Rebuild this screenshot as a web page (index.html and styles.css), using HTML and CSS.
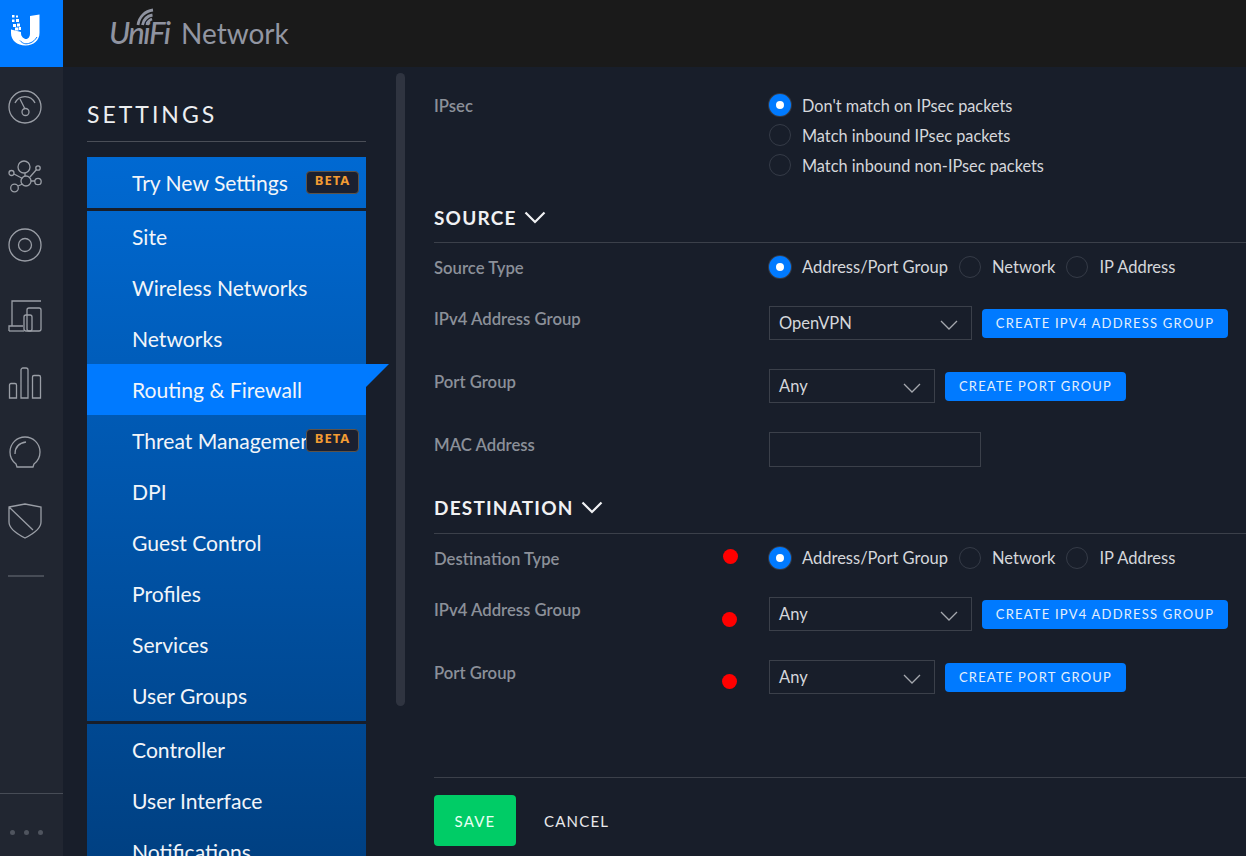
FILE: index.html
```html
<!DOCTYPE html>
<html lang="en">
<head>
  <meta charset="UTF-8" />
  <meta name="viewport" content="width=device-width, initial-scale=1.0"/>
  <title>UniFi Network</title>
  <link rel="stylesheet" href="styles.css">
</head>
<body>
  <div class="app">
    <header class="topbar">
      <a class="logo-box">
        <svg width="32" height="34" viewBox="0 0 32 34">
          <path fill="#fff" d="M20 3L29.500 1.500V20C29.500 27.500 23.500 32.500 15.500 32.500C7 32.500 1 27.500 1 20V16.500L11 19V20.500C11 23.500 14 26 16 26C18.500 26 20 23.500 20 20.500Z"/>
          <path fill="#fff" d="M2 2h2.500v2.500H2zM6 2.500h2v2H6zM2 6.500h2.500v2.500H2zM6 6h3v3H6zM3 11h3v3H3zM7 10.500h3v3H7zM5 14.500h3.500v3H5zM9 14h2v3H9z"/>
          <path fill="none" stroke="#007aff" stroke-width="1" d="M10 27.500c3 3.500 6 4 10 2.500 3-1 5-3 7-6"/>
        </svg>
      </a>
      <div class="wordmark">
        <svg class="wifi" width="26" height="18" viewBox="0 0 26 18">
          <path fill="none" stroke="#8f93a0" stroke-width="2.800" d="M3 17C4 9 10 3 18 2M7.500 17c1-5 4.500-9 10-10M12 17c.5-3 2.500-5 5-6"/>
        </svg>
        <span class="wordmark-unifi">UniFi</span>
        <span class="wordmark-network">Network</span>
      </div>
    </header>

    <nav class="rail">
      <svg class="rail-icon" viewBox="0 0 34 34"><circle cx="17" cy="17" r="16"/><path d="M7 13a11 11 0 0 1 20 0M12 9l5 10"/><circle cx="17.500" cy="22" r="3.500"/></svg>
      <svg class="rail-icon" viewBox="0 0 34 34"><circle cx="16" cy="8" r="6"/><circle cx="18" cy="22" r="5"/><circle cx="30" cy="9" r="2.200"/><circle cx="30" cy="22.500" r="3.200"/><circle cx="3.500" cy="14" r="2.500"/><circle cx="6.500" cy="29" r="3.800"/><path d="M17 14v3M22 18l6.500-7.500M23 22h4M6 15l8.500 4.500M10 27l4.500-2"/></svg>
      <svg class="rail-icon" viewBox="0 0 34 34"><circle cx="17" cy="17" r="16"/><circle cx="17" cy="17" r="6.500"/></svg>
      <svg class="rail-icon" viewBox="0 0 34 34"><path d="M33 4H4v25M1 34v-5h14"/><path d="M1 34h15"/><rect x="19" y="11" width="14" height="23" rx="2"/><rect x="16" y="18" width="8" height="16" rx="2"/></svg>
      <svg class="rail-icon" viewBox="0 0 34 34"><path d="M1.500 32V19a1.500 1.500 0 0 1 1.500-1.500h4A1.500 1.500 0 0 1 8.500 19v13zM13 32V4a2 2 0 0 1 2-2h3a2 2 0 0 1 2 2v28zM24.500 32V11a1.500 1.500 0 0 1 1.500-1.500h5a1.500 1.500 0 0 1 1.500 1.500v21z"/></svg>
      <svg class="rail-icon" viewBox="0 0 34 34"><path d="M9 32h16l1-3c4-3 6-7 6-12A15 15 0 0 0 2 17c0 5 2 9 6 12zM7 19c0-7 4-11 11-12"/></svg>
      <svg class="rail-icon" viewBox="0 0 34 34"><path d="M1 3l16-3 16 3v15c0 7-8 12-16 16C9 30 1 25 1 18zM1 3l24 23"/></svg>
      <div class="rail-divider"></div>
      <div class="rail-bottom"><i></i><i></i><i></i></div>
    </nav>

    <main class="workspace">
      <aside class="settings-panel">
        <h1 class="settings-title">SETTINGS</h1>
        <div class="menu">
          <div class="menu-group">
            <a class="menu-item">Try New Settings<span class="beta">BETA</span></a>
          </div>
          <div class="menu-group">
            <a class="menu-item">Site</a>
            <a class="menu-item">Wireless Networks</a>
            <a class="menu-item">Networks</a>
            <a class="menu-item active">Routing &amp; Firewall</a>
            <a class="menu-item">Threat Management<span class="beta">BETA</span></a>
            <a class="menu-item">DPI</a>
            <a class="menu-item">Guest Control</a>
            <a class="menu-item">Profiles</a>
            <a class="menu-item">Services</a>
            <a class="menu-item">User Groups</a>
          </div>
          <div class="menu-group">
            <a class="menu-item">Controller</a>
            <a class="menu-item">User Interface</a>
            <a class="menu-item">Notifications</a>
          </div>
        </div>
        <div class="scrollbar"></div>
      </aside>

      <section class="content">
        <div class="form-row ipsec-row">
          <div class="form-label">IPsec</div>
          <div class="radio-stack">
            <label class="radio"><span class="radio-dot on"></span>Don't match on IPsec packets</label>
            <label class="radio"><span class="radio-dot"></span>Match inbound IPsec packets</label>
            <label class="radio"><span class="radio-dot"></span>Match inbound non-IPsec packets</label>
          </div>
        </div>

        <h2 class="section-title">SOURCE
          <svg width="22" height="13" viewBox="0 0 22 13"><path d="M1.500 1.500l9.500 9.500 9.500-9.500"/></svg>
        </h2>
        <div class="form-row">
          <div class="form-label">Source Type</div>
          <div class="radio-line">
            <label class="radio"><span class="radio-dot on"></span>Address/Port Group</label>
            <label class="radio"><span class="radio-dot"></span>Network</label>
            <label class="radio"><span class="radio-dot"></span>IP Address</label>
          </div>
        </div>
        <div class="form-row row-select">
          <div class="form-label label-select">IPv4 Address Group</div>
          <div class="control-line">
            <div class="select select-wide">OpenVPN<svg width="18" height="10" viewBox="0 0 18 10"><path d="M1 1l8 8 8-8"/></svg></div>
            <button class="btn-create btn-ipv4">CREATE IPV4 ADDRESS GROUP</button>
          </div>
        </div>
        <div class="form-row row-select">
          <div class="form-label label-select">Port Group</div>
          <div class="control-line">
            <div class="select select-narrow">Any<svg width="18" height="10" viewBox="0 0 18 10"><path d="M1 1l8 8 8-8"/></svg></div>
            <button class="btn-create btn-port">CREATE PORT GROUP</button>
          </div>
        </div>
        <div class="form-row row-select">
          <div class="form-label label-select">MAC Address</div>
          <div class="control-line"><div class="text-input"></div></div>
        </div>

        <h2 class="section-title section-dest">DESTINATION
          <svg width="22" height="13" viewBox="0 0 22 13"><path d="M1.500 1.500l9.500 9.500 9.500-9.500"/></svg>
        </h2>
        <div class="form-row">
          <div class="form-label">Destination Type</div>
          <div class="radio-line">
            <label class="radio"><span class="radio-dot on"></span>Address/Port Group</label>
            <label class="radio"><span class="radio-dot"></span>Network</label>
            <label class="radio"><span class="radio-dot"></span>IP Address</label>
          </div>
          <span class="red-dot dot-type"></span>
        </div>
        <div class="form-row row-select">
          <div class="form-label label-select">IPv4 Address Group</div>
          <div class="control-line">
            <div class="select select-wide">Any<svg width="18" height="10" viewBox="0 0 18 10"><path d="M1 1l8 8 8-8"/></svg></div>
            <button class="btn-create btn-ipv4">CREATE IPV4 ADDRESS GROUP</button>
          </div>
          <span class="red-dot dot-group"></span>
        </div>
        <div class="form-row row-select">
          <div class="form-label label-select">Port Group</div>
          <div class="control-line">
            <div class="select select-narrow">Any<svg width="18" height="10" viewBox="0 0 18 10"><path d="M1 1l8 8 8-8"/></svg></div>
            <button class="btn-create btn-port">CREATE PORT GROUP</button>
          </div>
          <span class="red-dot dot-port"></span>
        </div>

        <div class="form-actions">
          <button class="btn-save">SAVE</button>
          <button class="btn-cancel">CANCEL</button>
        </div>
      </section>
    </main>
  </div>
</body>
</html>
```

FILE: styles.css
```css
* { box-sizing: border-box; }
html, body {
  margin: 0;
  height: 100%;
  overflow: hidden;
}
body {
  font-family: Lato, "Open Sans", sans-serif;
  font-size: 16px;
  background: #181e2a;
  color: #fff;
}
.app {
  display: grid;
  grid-template-columns: 63px 1fr;
  grid-template-rows: 67px 1fr;
  height: 856px;
}

/* top bar */
.topbar {
  grid-column: 1 / 3;
  display: flex;
  background: #1a1a1a;
}
.logo-box {
  width: 63px;
  height: 67px;
  background: #007aff;
  padding: 13px 0 0 10px;
}
.wordmark {
  position: relative;
  display: flex;
  align-items: baseline;
  margin-left: 46px;
  padding-top: 13px;
  color: #8f93a0;
}
.wordmark-unifi {
  font-style: italic;
  font-weight: 500;
  font-size: 31px;
  width: 72px;
  letter-spacing: -1.500px;
}
.wordmark-network {
  font-size: 28px;
  color: #9296a2;
}
.wifi {
  position: absolute;
  left: 26px;
  top: 8px;
}

/* left rail */
.rail {
  display: flex;
  flex-direction: column;
  background: #212631;
  padding-top: 23px;
  position: relative;
}
.rail-icon {
  width: 34px;
  height: 34px;
  margin: 0 0 35px 8px;
  fill: none;
  stroke: #9a9ea6;
  stroke-width: 1.300;
  flex: none;
  overflow: visible;
}
.rail-divider {
  width: 36px;
  height: 2px;
  background: #474c56;
  margin: 2px 0 0 8px;
}
.rail-bottom {
  margin-top: auto;
  height: 63px;
  border-top: 1px solid #474c56;
  display: flex;
  gap: 9px;
  padding: 36px 0 0 10px;
}
.rail-bottom i {
  width: 5px;
  height: 5px;
  border-radius: 50%;
  background: #4f545e;
}

/* settings menu */
.workspace {
  display: flex;
  min-width: 0;
  overflow: hidden;
}
.settings-panel {
  position: relative;
  width: 371px;
  flex: none;
  padding: 0 0 0 24px;
}
.settings-title {
  margin: 0;
  width: 279px;
  height: 75px;
  padding-top: 32px;
  font-size: 23px;
  font-weight: 400;
  line-height: 30px;
  letter-spacing: 3px;
  color: #eceef0;
  border-bottom: 1px solid #4a4e57;
}
.menu {
  width: 279px;
  margin-top: 15px;
  background: linear-gradient(#0069d2, #003f80);
}
.menu-group + .menu-group { border-top: 3px solid #181e2a; }
.menu-item {
  position: relative;
  display: block;
  height: 51px;
  padding-left: 45px;
  font-size: 21.100px;
  line-height: 52px;
  white-space: nowrap;
  color: #f2f5f9;
}
.menu-item.active { background: #007aff; }
.menu-item.active::after {
  content: "";
  position: absolute;
  left: 100%;
  top: 0;
  border-top: 23px solid #007aff;
  border-right: 23px solid transparent;
}
.beta {
  position: absolute;
  left: 219px;
  top: 14px;
  width: 53px;
  height: 23px;
  background: #1b2030;
  border: 1px solid #5e5348;
  border-radius: 4px;
  font-family: "Noto Sans", sans-serif;
  font-size: 13px;
  font-weight: 700;
  line-height: 17px;
  letter-spacing: 1px;
  text-align: center;
  color: #f39c33;
}
.scrollbar {
  position: absolute;
  left: 333px;
  top: 6px;
  width: 9px;
  height: 633px;
  border-radius: 5px;
  background: #2f3440;
}

/* form */
.content {
  position: relative;
  flex: 1;
  min-width: 0;
  padding-top: 27px;
}
.form-row {
  position: relative;
  display: grid;
  grid-template-columns: 335px 1fr;
  margin-bottom: 28px;
}
.row-select { margin-bottom: 29px; }
.ipsec-row { margin-bottom: 30px; }
.form-label {
  height: 22px;
  padding-top: 1px;
  font-size: 16.700px;
  font-weight: 600;
  line-height: 22px;
  color: #8b9099;
}
.label-select { padding-top: 2px; }
.radio-stack {
  display: flex;
  flex-direction: column;
  gap: 8px;
  font-size: 16.300px;
}
.radio-stack .radio {
  height: 22px;
  padding-top: 2px;
}
.radio-stack .radio-dot { margin-top: -2px; }
.radio-line {
  display: flex;
  gap: 11px;
  font-size: 16.500px;
}
.radio {
  display: flex;
  align-items: center;
  gap: 11px;
  line-height: 22px;
  color: #d5d7db;
}
.radio-dot {
  width: 22px;
  height: 22px;
  border-radius: 50%;
  border: 1px solid #353b47;
  flex: none;
}
.radio-dot.on {
  border: 7px solid #007aff;
  background: #fff;
  box-shadow: 0 0 0 1px #353b47;
}
.section-title {
  display: flex;
  align-items: center;
  gap: 7px;
  margin: 0 0 13px;
  height: 37px;
  padding-bottom: 13px;
  border-bottom: 1px solid #3b404a;
  font-size: 19px;
  font-weight: 700;
  letter-spacing: 1.200px;
  color: #f0f1f3;
}
.section-title svg {
  fill: none;
  stroke: #f0f1f3;
  stroke-width: 2.200;
}
.section-dest {
  height: 38px;
  padding-bottom: 14px;
}
.control-line {
  display: flex;
  align-items: flex-start;
  gap: 10px;
}
.select {
  display: flex;
  align-items: center;
  justify-content: space-between;
  height: 34px;
  padding: 0 13px 0 9px;
  border: 1px solid #3b404a;
  font-size: 16.500px;
  color: #d5d7db;
}
.select svg {
  fill: none;
  stroke: #a5a8ae;
  stroke-width: 1.300;
  margin-top: 4px;
}
.select-wide { width: 203px; }
.select-narrow { width: 166px; }
.text-input {
  width: 212px;
  height: 35px;
  border: 1px solid #3b404a;
}
.btn-create {
  height: 29px;
  margin-top: 3px;
  padding: 0 0 2px;
  border: 0;
  border-radius: 4px;
  background: #007aff;
  font: 400 13px Lato, sans-serif;
  letter-spacing: 1.200px;
  color: #e4effc;
}
.btn-ipv4 { width: 246px; }
.btn-port { width: 181px; }
.red-dot {
  position: absolute;
  width: 15px;
  height: 15px;
  border-radius: 50%;
  background: #f00;
}
.dot-type { left: 289px; top: 2px; }
.dot-group { left: 288px; top: 15px; }
.dot-port { left: 288px; top: 14px; }
.form-actions {
  display: flex;
  align-items: center;
  gap: 28px;
  margin-top: 83px;
  padding-top: 17px;
  border-top: 1px solid #3b404a;
}
.btn-save {
  width: 82px;
  height: 51px;
  border: 0;
  border-radius: 4px;
  background: #00cc66;
  font: 400 15px Lato, sans-serif;
  letter-spacing: 1.200px;
  color: #e8fff3;
}
.btn-cancel {
  padding: 0;
  border: 0;
  background: none;
  font: 400 15px Lato, sans-serif;
  letter-spacing: 1.200px;
  color: #e8e9eb;
}
```
